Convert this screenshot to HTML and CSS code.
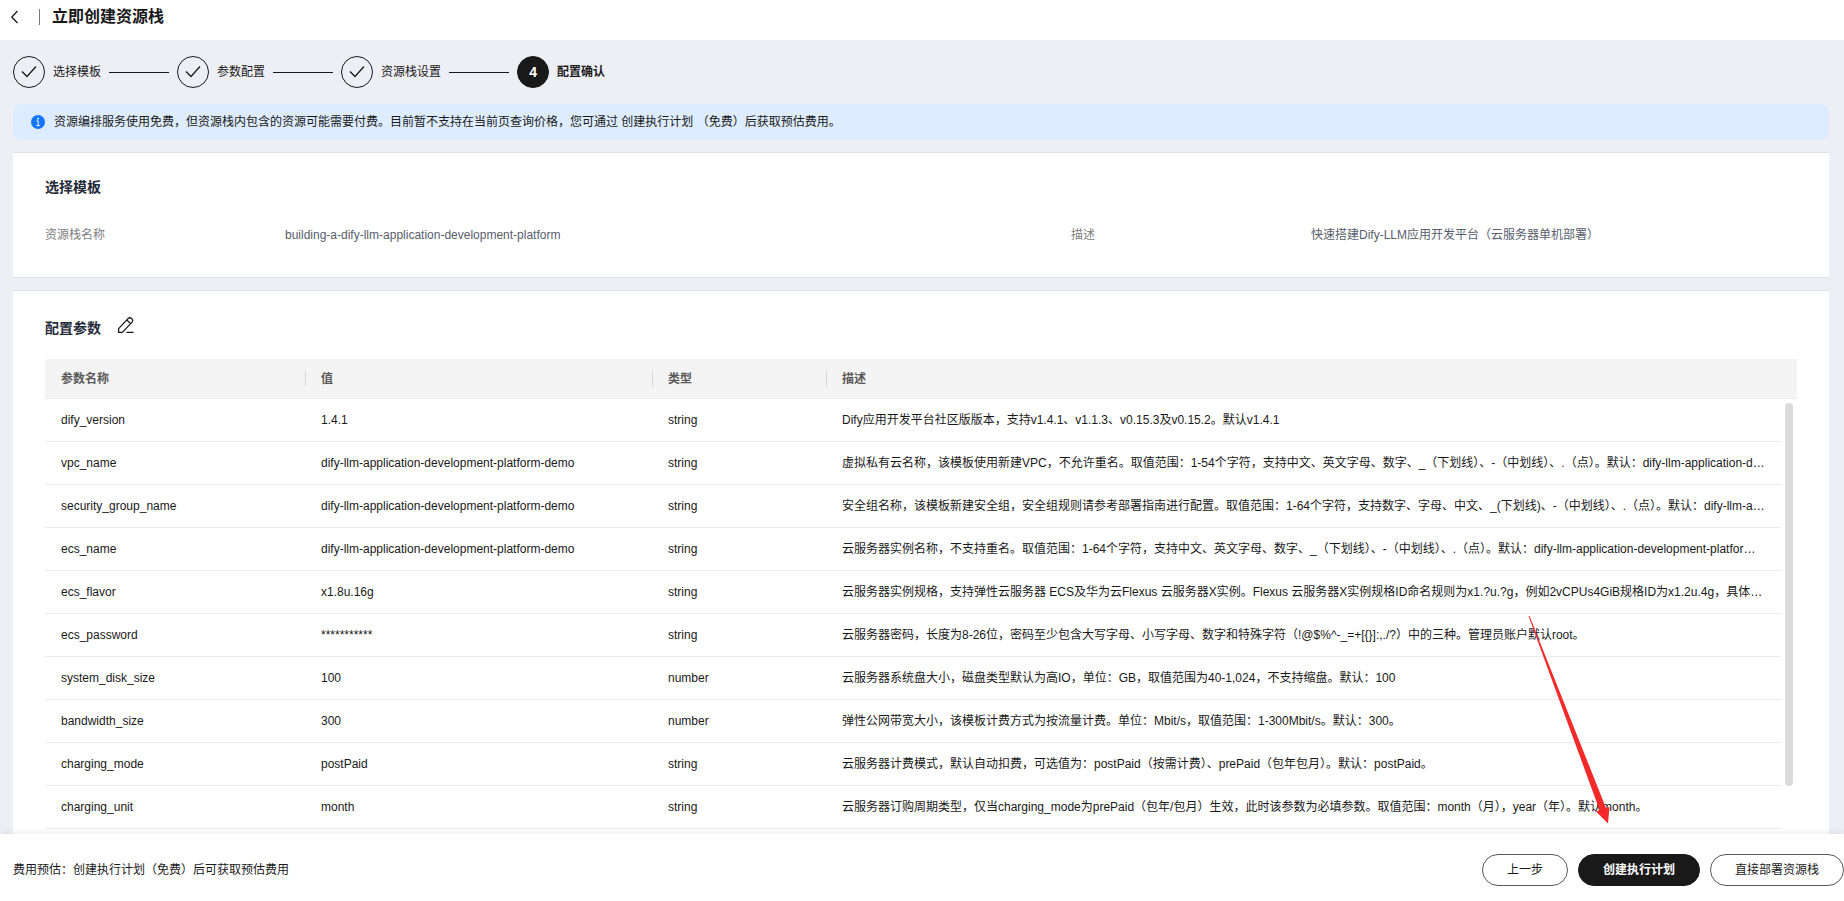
FILE: index.html
```html
<!DOCTYPE html>
<html lang="zh-CN">
<head>
<meta charset="utf-8">
<title>立即创建资源栈</title>
<link rel="stylesheet" href="styles.css">
</head>
<body>
<header class="topbar">
  <button class="icon-btn" type="button" aria-label="返回"><svg width="16" height="16" viewBox="0 0 16 16"><path d="M10.5 2 L4.8 8 L10.5 14" fill="none" stroke="#191919" stroke-width="1.3"/></svg></button>
  <span class="divider"></span>
  <h1 class="page-title">立即创建资源栈</h1>
</header>
<main class="content">
  <ol class="steps">
    <li class="step"><span class="dot"><svg width="16" height="16" viewBox="0 0 16 16"><path d="M1 7.5 L6 12.5 L15 2.500" fill="none" stroke="#191919" stroke-width="1.3"/></svg></span>选择模板</li>
    <li class="step"><span class="dot"><svg width="16" height="16" viewBox="0 0 16 16"><path d="M1 7.5 L6 12.5 L15 2.500" fill="none" stroke="#191919" stroke-width="1.3"/></svg></span>参数配置</li>
    <li class="step"><span class="dot"><svg width="16" height="16" viewBox="0 0 16 16"><path d="M1 7.5 L6 12.5 L15 2.500" fill="none" stroke="#191919" stroke-width="1.3"/></svg></span>资源栈设置</li>
    <li class="step current"><span class="dot">4</span>配置确认</li>
  </ol>
  <div class="alert">
    <svg width="14" height="14" viewBox="0 0 14 14"><circle cx="7" cy="7" r="7" fill="#1476ff"/><circle cx="7" cy="3.7" r="0.9" fill="#fff"/><path d="M5.6 5.9 H7.2 V10.6 M5.5 10.6 H8.7" fill="none" stroke="#fff"/></svg>
    <span>资源编排服务使用免费，但资源栈内包含的资源可能需要付费。目前暂不支持在当前页查询价格，您可通过 创建执行计划 （免费）后获取预估费用。</span>
  </div>
  <section class="card">
    <h2 class="card-title">选择模板</h2>
    <dl class="info">
      <div class="pair"><dt>资源栈名称</dt><dd>building-a-dify-llm-application-development-platform</dd></div>
      <div class="pair"><dt>描述</dt><dd>快速搭建Dify-LLM应用开发平台（云服务器单机部署）</dd></div>
    </dl>
  </section>
  <section class="card params">
    <div class="title-row">
      <h2 class="card-title">配置参数</h2>
      <button class="icon-btn" type="button" aria-label="编辑"><svg width="18" height="18" viewBox="0 0 18 18" fill="none" stroke="#191919" stroke-width="1.3" stroke-linejoin="round"><path d="M1.6 15.400 L1.6 11.6 L11 1.600 Q12.800 0 14.600 1.400 Q16.600 3.100 15 5.100 L5.4 15.400 Z M9.8 3 L13.600 6.600 M9.5 15.400 H16.6"/></svg></button>
    </div>
    <div class="table-wrap">
      <table class="table">
        <colgroup><col class="c-name"><col class="c-value"><col class="c-type"><col><col class="c-gutter"></colgroup>
        <thead><tr><th>参数名称</th><th>值</th><th>类型</th><th>描述</th><th></th></tr></thead>
        <tbody>
          <tr><td>dify_version</td><td>1.4.1</td><td>string</td><td>Dify应用开发平台社区版版本，支持v1.4.1、v1.1.3、v0.15.3及v0.15.2。默认v1.4.1</td></tr>
          <tr><td>vpc_name</td><td>dify-llm-application-development-platform-demo</td><td>string</td><td>虚拟私有云名称，该模板使用新建VPC，不允许重名。取值范围：1-54个字符，支持中文、英文字母、数字、_（下划线）、-（中划线）、.（点）。默认：dify-llm-application-development-platform-demo</td></tr>
          <tr><td>security_group_name</td><td>dify-llm-application-development-platform-demo</td><td>string</td><td>安全组名称，该模板新建安全组，安全组规则请参考部署指南进行配置。取值范围：1-64个字符，支持数字、字母、中文、_(下划线)、-（中划线）、.（点）。默认：dify-llm-application-development-platform-demo</td></tr>
          <tr><td>ecs_name</td><td>dify-llm-application-development-platform-demo</td><td>string</td><td>云服务器实例名称，不支持重名。取值范围：1-64个字符，支持中文、英文字母、数字、_（下划线）、-（中划线）、.（点）。默认：dify-llm-application-development-platform-demo</td></tr>
          <tr><td>ecs_flavor</td><td>x1.8u.16g</td><td>string</td><td>云服务器实例规格，支持弹性云服务器 ECS及华为云Flexus 云服务器X实例。Flexus 云服务器X实例规格ID命名规则为x1.?u.?g，例如2vCPUs4GiB规格ID为x1.2u.4g，具体规格请参考部署指南配置。</td></tr>
          <tr><td>ecs_password</td><td>***********</td><td>string</td><td>云服务器密码，长度为8-26位，密码至少包含大写字母、小写字母、数字和特殊字符（!@$%^-_=+[{}]:,./?）中的三种。管理员账户默认root。</td></tr>
          <tr><td>system_disk_size</td><td>100</td><td>number</td><td>云服务器系统盘大小，磁盘类型默认为高IO，单位：GB，取值范围为40-1,024，不支持缩盘。默认：100</td></tr>
          <tr><td>bandwidth_size</td><td>300</td><td>number</td><td>弹性公网带宽大小，该模板计费方式为按流量计费。单位：Mbit/s，取值范围：1-300Mbit/s。默认：300。</td></tr>
          <tr><td>charging_mode</td><td>postPaid</td><td>string</td><td>云服务器计费模式，默认自动扣费，可选值为：postPaid（按需计费）、prePaid（包年包月）。默认：postPaid。</td></tr>
          <tr><td>charging_unit</td><td>month</td><td>string</td><td>云服务器订购周期类型，仅当charging_mode为prePaid（包年/包月）生效，此时该参数为必填参数。取值范围：month（月），year（年）。默认month。</td></tr>
        </tbody>
      </table>
      <div class="scrollbar"></div>
    </div>
  </section>
</main>
<footer class="footer">
  <span>费用预估：创建执行计划（免费）后可获取预估费用</span>
  <div class="actions">
    <button class="btn" type="button">上一步</button>
    <button class="btn primary" type="button">创建执行计划</button>
    <button class="btn" type="button">直接部署资源栈</button>
  </div>
</footer>
<svg class="arrow" width="84" height="210" viewBox="0 0 84 210"><path d="M1.500 0 L2.500 0 L79 192 L82.500 191 L81 207.500 L69 195.500 L72.500 194 Z" fill="#f42a2a"/></svg>
</body>
</html>
```
FILE: styles.css
```css
* {
  box-sizing: border-box;
}

body {
  margin: 0;
  height: 100vh;
  display: flex;
  flex-direction: column;
  overflow: hidden;
  background: #eeeff5;
  color: #191919;
  font: 12px/18px "Liberation Sans", "Noto Sans CJK SC", sans-serif;
}

h1, h2, dl, dd, ol {
  margin: 0;
  padding: 0;
}

.topbar {
  display: flex;
  align-items: center;
  height: 40px;
  padding: 0 8px 6px 7px;
  background: #fff;
}

.icon-btn {
  display: flex;
  padding: 0;
  border: 0;
  background: none;
}

.divider {
  width: 1px;
  height: 16px;
  margin: 0 12px 0 16px;
  background: #777;
}

.page-title {
  font-size: 16px;
  line-height: 24px;
}

.content {
  flex: 1;
  min-height: 0;
  overflow: hidden;
  padding: 16px 15px 0 13px;
}

.steps {
  display: flex;
  gap: 8px;
  list-style: none;
}

.step {
  display: flex;
  align-items: center;
  gap: 8px;
}

.step:not(:last-child)::after {
  content: "";
  width: 60px;
  height: 1px;
  background: #191919;
}

.current {
  font-weight: bold;
}

.dot {
  display: flex;
  align-items: center;
  justify-content: center;
  width: 32px;
  height: 32px;
  border: 1px solid #191919;
  border-radius: 50%;
}

.current .dot {
  background: #191919;
  color: #fff;
  font-size: 14px;
}

.alert {
  display: flex;
  align-items: center;
  gap: 9px;
  min-height: 36px;
  margin: 16px 0 12px;
  padding: 0 18px;
  border-radius: 8px;
  background: #deecff;
}

.card {
  padding: 23px 32px 33px;
  border: solid #dfe1e6;
  border-width: 1px 0;
  background: #fff;
}

.card-title {
  color: #252b3a;
  font-size: 14px;
  line-height: 22px;
}

.info {
  display: grid;
  grid-template-columns: 1026fr 726fr;
  margin-top: 28px;
}

.pair {
  display: flex;
}

.pair dt {
  flex: 0 0 240px;
  color: #808080;
}

.pair dd {
  color: #575d6c;
}

.params {
  margin-top: 12px;
  padding-top: 26px;
}

.title-row {
  display: flex;
  gap: 16px;
}

.table-wrap {
  position: relative;
  margin-top: 20px;
}

.table {
  width: 100%;
  table-layout: fixed;
  border-collapse: separate;
  border-spacing: 0;
}

.c-name {
  width: 260px;
}

.c-value {
  width: 347px;
}

.c-type {
  width: 174px;
}

.c-gutter {
  width: 16px;
}

th {
  height: 40px;
  padding: 0 16px;
  border-bottom: 1px solid #ececec;
  background: #f4f4f4;
  color: #595959;
  text-align: left;
}

th:nth-child(2),
th:nth-child(3),
th:nth-child(4) {
  background: linear-gradient(#d5d5d5, #d5d5d5) left 12px / 1px 16px no-repeat #f4f4f4;
}

td {
  height: 43px;
  padding: 0 16px;
  overflow: hidden;
  border-bottom: 1px solid #ececec;
  text-overflow: ellipsis;
  white-space: nowrap;
}

.scrollbar {
  position: absolute;
  top: 44px;
  right: 4px;
  width: 8px;
  height: 383px;
  border-radius: 4px;
  background: #dbdbdb;
}

.footer {
  position: relative;
  display: flex;
  align-items: center;
  justify-content: space-between;
  padding: 20px 0 15px 13px;
  background: #fff;
  box-shadow: 0 0 8px rgba(0, 0, 0, 0.1);
}

.actions {
  display: flex;
  gap: 10px;
}

.btn {
  height: 32px;
  padding: 0 24px;
  border: 1px solid #595959;
  border-radius: 16px;
  background: #fff;
  color: #191919;
  font: inherit;
}

.primary {
  border-color: #191919;
  background: #191919;
  color: #fff;
  font-weight: bold;
}

.arrow {
  position: absolute;
  left: 1527px;
  top: 616px;
}
```
